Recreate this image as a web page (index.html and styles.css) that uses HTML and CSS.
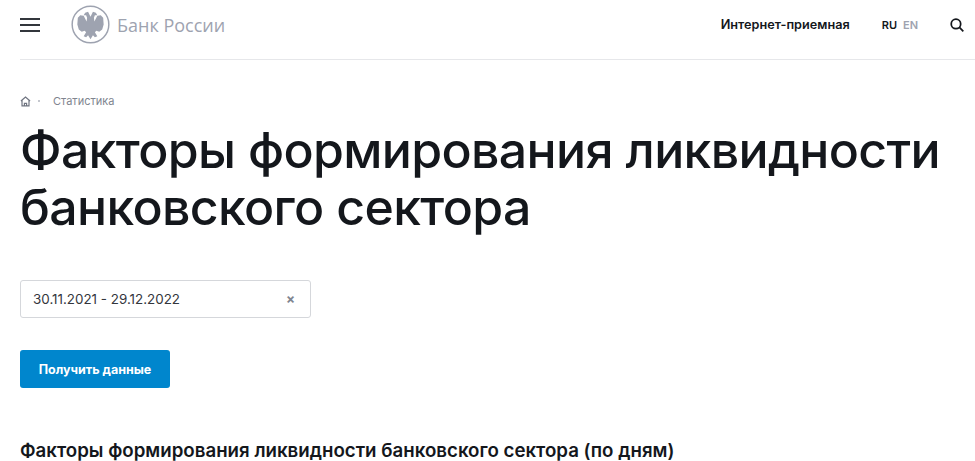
FILE: index.html
```html
<!DOCTYPE html>
<html lang="ru">
<head>
    <meta charset="UTF-8">
    <meta name="viewport" content="width=device-width, initial-scale=1.0">
    <title>Факторы формирования ликвидности банковского сектора</title>
    <link rel="stylesheet" href="styles.css">
</head>
<body>
    <header class="header">
        <div class="burger"><span></span><span></span><span></span></div>
        <div class="logo">
            <svg class="logo-mark" viewBox="0 0 40 40" width="39" height="39">
                <circle cx="20" cy="20" r="18.8" fill="none" stroke="#9ea3b0" stroke-width="1.5"/>
                <path fill="#9ea3b0" d="M20 12L17.500 7 14.500 8 13 10.500H15.500L16.500 13 16 17 13 11 9.500 10.500 7 13 6.500 20 8 25 11 27.500 14 26.500 15.500 28 13 32 15.500 33 17.500 31 20 35 22.500 31 24.500 33 27 32 24.500 28 26 26.500 29 27.500 32 25 33.500 20 33 13 30.500 10.500 27 11 24 17 23.500 13 24.500 10.500H27L25.500 8 22.500 7z"/>
            </svg>
            <span class="logo-text">Банк России</span>
        </div>
        <a class="reception">Интернет-приемная</a>
        <div class="langs"><b>RU</b><span>EN</span></div>
        <svg class="search" viewBox="0 0 16 16" width="14" height="14">
            <circle cx="6.800" cy="6.800" r="5.400" fill="none" stroke="#14171c" stroke-width="2"/>
            <path d="M10.800 10.800l4.400 4.400" stroke="#14171c" stroke-width="2" fill="none"/>
        </svg>
    </header>

    <main class="content">
        <nav class="crumbs">
            <svg class="home" viewBox="0 0 12 12" width="11" height="11">
                <path d="M1 5.500L6 1.200l5 4.300M2.200 4.800v6h7.600v-6M4.800 10.800V8h2.400v2.800" fill="none" stroke="#6f7480" stroke-width="1.300"/>
            </svg>
            <span class="crumb-sep"></span>
            <span>Статистика</span>
        </nav>
        <h1>Факторы формирования ликвидности банковского сектора</h1>
        <div class="date-field">
            <span>30.11.2021 - 29.12.2022</span>
            <span class="clear">×</span>
        </div>
        <button class="submit">Получить данные</button>
        <h2>Факторы формирования ликвидности банковского сектора (по дням)</h2>
    </main>
</body>
</html>
```

FILE: styles.css
```css
html, body {
    margin: 0;
    height: 100%;
    overflow: hidden;
    background: white;
    color: #14171c;
    font-family: Inter, "Liberation Sans", sans-serif;
}
.header {
    display: flex;
    align-items: center;
    height: 49px;
    margin: 0 0 0 20px;
    border-bottom: 1px solid #e6e7ea;
    padding: 0 11px 10px 0;
}
.burger {
    display: flex;
    flex-direction: column;
    gap: 4px;
    width: 20px;
}
.burger span {
    height: 2px;
    background: #33363c;
}
.logo {
    display: flex;
    align-items: center;
    gap: 7px;
    margin-left: 31px;
}
.logo-text {
    font-family: "Open Sans", sans-serif;
    font-size: 18px;
    color: #9ea3b0;
}
.reception {
    margin-left: auto;
    font-size: 12.7px;
    font-weight: 600;
}
.langs {
    display: flex;
    gap: 6px;
    margin-left: 32px;
    font-size: 11px;
    font-weight: 600;
}
.langs b {
    font-weight: 600;
}
.langs span {
    color: #9ea3b0;
}
.search {
    margin-left: 32px;
}
.content {
    padding: 0 20px;
}
.crumbs {
    display: flex;
    align-items: center;
    margin-top: 34px;
    font-size: 11px;
    color: #80858f;
}
.crumb-sep {
    width: 2px;
    height: 2px;
    margin: 0 13px 0 7px;
    background: #c4c7ce;
}
h1 {
    margin: 14px 0 0;
    font-size: 50px;
    line-height: 57px;
    font-weight: 500;
    letter-spacing: -0.65px;
}
.date-field {
    display: flex;
    justify-content: space-between;
    align-items: center;
    box-sizing: border-box;
    width: 291px;
    height: 38px;
    margin-top: 44px;
    padding: 0 15px 0 12px;
    border: 1px solid #d5d7db;
    border-radius: 3px;
    font-size: 13.4px;
    color: #33363c;
}
.clear {
    color: #80858f;
    font-weight: 700;
}
.submit {
    display: block;
    width: 150px;
    height: 38px;
    margin-top: 32px;
    padding: 0;
    border: none;
    border-radius: 3px;
    background: #0086cd;
    color: white;
    font-family: inherit;
    font-size: 12.5px;
    font-weight: 700;
}
h2 {
    margin: 53px 0 0;
    font-size: 18.7px;
    line-height: 20px;
    font-weight: 600;
}
```
